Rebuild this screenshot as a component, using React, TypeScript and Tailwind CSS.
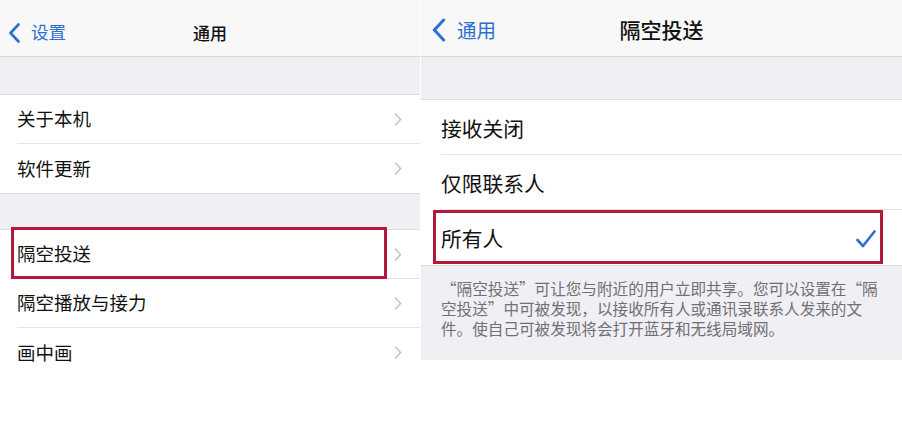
import React from 'react'

const FONT = { fontFamily: '"Noto Sans CJK SC", "Noto Sans", sans-serif' }

function BackChevron({ className }: { className?: string }) {
  return (
    <svg viewBox="0 0 12 20" className={className} fill="none">
      <path d="M10 1.5 L2 10 L10 18.5" stroke="#2e6fd1" strokeWidth="2.6" strokeLinecap="round" strokeLinejoin="round" />
    </svg>
  )
}

function RowChevron() {
  return (
    <svg viewBox="0 0 8 13" className="w-[8px] h-[13px]" fill="none">
      <path d="M1.5 1 L6.5 6.5 L1.5 12" stroke="#c4c4c8" strokeWidth="1.6" strokeLinecap="round" strokeLinejoin="round" />
    </svg>
  )
}

function Check() {
  return (
    <svg viewBox="0 0 20 18" className="w-[20px] h-[18px]" fill="none">
      <path d="M1.5 10 L7 16 L18.5 1.5" stroke="#2e6fd1" strokeWidth="2.6" strokeLinecap="round" strokeLinejoin="round" />
    </svg>
  )
}

function NavBar({ back, title, small }: { back: string; title: string; small?: boolean }) {
  return (
    <div className="h-[57px] bg-[#f8f8f8] border-b border-[#d8d8da] grid grid-cols-[1fr_auto_1fr] items-center">
      <div className={`flex items-center ${small ? 'pl-[8px] pt-[9px] gap-[10px]' : 'pl-[11px] pt-[3px] gap-[11px]'}`}>
        <BackChevron className={small ? 'w-[13px] h-[20px]' : 'w-[14px] h-[24px]'} />
        <span className={`text-[#2e6fd1] ${small ? 'text-[17.5px]' : 'text-[19.5px]'}`}>{back}</span>
      </div>
      <div className={`font-medium text-[#111] ${small ? 'text-[17px] pt-[9px]' : 'text-[21px] pt-[3px]'}`}>{title}</div>
      <div />
    </div>
  )
}

function LeftRow({ label, last }: { label: string; last?: boolean }) {
  return (
    <div className="h-[49px] pl-[17px] bg-white">
      <div className={`h-full flex items-center justify-between pr-[18px] ${last ? '' : 'border-b border-[#e3e3e5]'}`}>
        <span className="text-[18.5px] text-[#111]">{label}</span>
        <RowChevron />
      </div>
    </div>
  )
}

function RightRow({ label, checked, last }: { label: string; checked?: boolean; last?: boolean }) {
  return (
    <div className="h-[55px] pl-[20px] bg-white">
      <div className={`h-full flex items-center justify-between pt-[3px] pr-[26px] ${last ? '' : 'border-b border-[#e3e3e5]'}`}>
        <span className="text-[20.75px] text-[#111]">{label}</span>
        {checked && <Check />}
      </div>
    </div>
  )
}

export default function App() {
  return (
    <div className="w-[902px] h-[439px] bg-white flex items-start overflow-hidden" style={FONT}>
      {/* Left: 通用 */}
      <div className="relative w-[420px] h-[376px] overflow-hidden bg-white">
        <NavBar back="设置" title="通用" small />
        <div className="h-[38px] bg-[#efeff4] border-b border-[#dedee0]" />
        <LeftRow label="关于本机" />
        <LeftRow label="软件更新" last />
        <div className="h-[37px] bg-[#efeff4] border-y border-[#dedee0]" />
        <LeftRow label="隔空投送" />
        <LeftRow label="隔空播放与接力" />
        <LeftRow label="画中画" last />
        <div className="absolute left-[11px] top-[227px] w-[376px] h-[52px] border-[3px] border-[#b3193a]" />
      </div>

      {/* Right: 隔空投送 */}
      <div className="relative ml-[1px] w-[481px] h-[360px] bg-[#efeff4]">
        <NavBar back="通用" title="隔空投送" />
        <div className="h-[43px] border-b border-[#dedee0]" />
        <RightRow label="接收关闭" />
        <RightRow label="仅限联系人" />
        <RightRow label="所有人" checked last />
        <div className="border-t border-[#dedee0] pl-[20px] pt-[12px] text-[15.6px] leading-[20px] text-[#6f6f74]">
          “隔空投送”可让您与附近的用户立即共享。您可以设置在“隔<br />
          空投送”中可被发现，以接收所有人或通讯录联系人发来的文<br />
          件。使自己可被发现将会打开蓝牙和无线局域网。
        </div>
        <div className="absolute left-[12px] top-[210px] w-[450px] h-[54px] border-[3px] border-[#b3193a]" />
      </div>
    </div>
  )
}
